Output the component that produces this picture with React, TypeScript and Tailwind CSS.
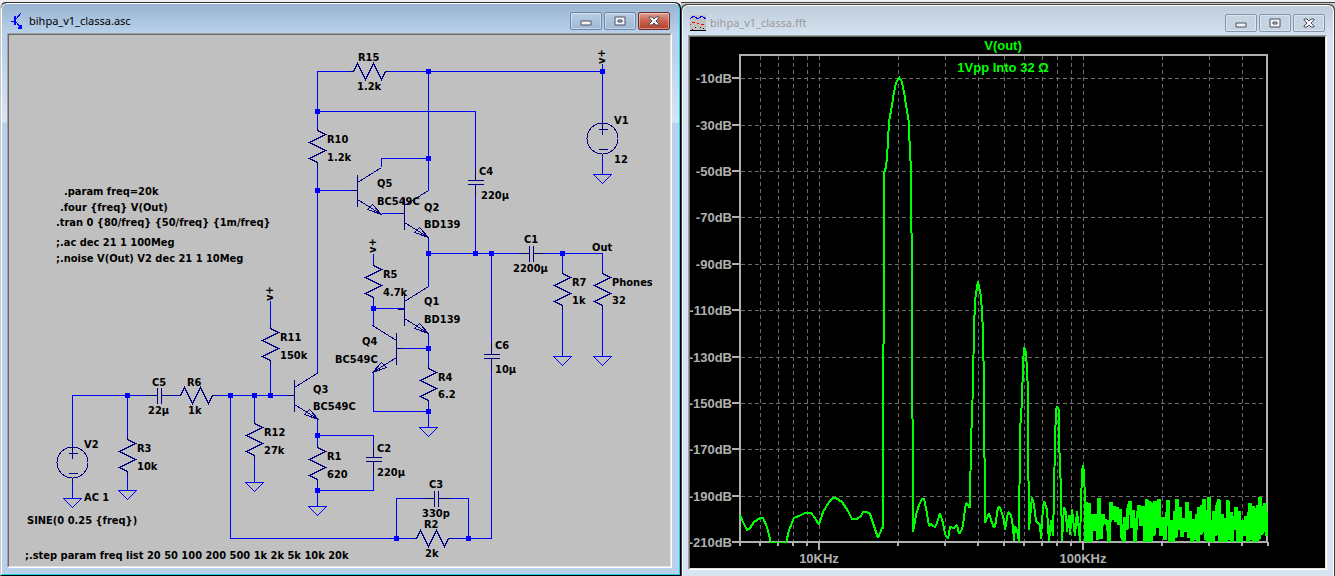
import type { ReactNode } from "react";

type Point = [number, number];
type Label = [number, number, string];

/* ---------- Schematic data ---------- */

const wires = [
  "M72 447V395H157",
  "M127 395V439",
  "M127 471V490",
  "M72 477V498",
  "M161 395H180",
  "M212 395H294",
  "M230 395V538H416",
  "M448 538H491V358",
  "M491 354V253",
  "M396 538V498H434",
  "M438 498H468V538",
  "M254 395V423",
  "M254 455V482",
  "M270 300V328",
  "M270 360V395",
  "M317 373V162",
  "M317 130V71H353",
  "M385 71H602",
  "M602 63V123",
  "M602 153V174",
  "M317 111H475V180",
  "M475 184V253",
  "M428 71V190",
  "M381 166V158H428",
  "M317 190H357",
  "M381 213H404",
  "M428 237V286",
  "M428 253H529",
  "M533 253H602V273",
  "M562 253V273",
  "M562 305V356",
  "M602 305V356",
  "M373 253V265",
  "M373 297V325",
  "M373 308H404",
  "M428 333V368",
  "M428 400V427",
  "M396 348H428",
  "M373 372V411H428",
  "M317 419V447",
  "M317 479V506",
  "M317 435H373V457",
  "M373 461V490H317",
];

const junctions: Point[] = [
  [428, 71], [602, 71], [317, 111], [428, 158], [317, 190],
  [428, 253], [475, 253], [491, 253], [562, 253], [373, 308],
  [428, 348], [428, 411], [127, 395], [230, 395], [254, 395],
  [270, 395], [317, 435], [317, 490], [396, 538], [468, 538],
];

const grounds: Point[] = [
  [72, 498], [127, 490], [254, 482], [317, 506],
  [428, 427], [562, 356], [602, 356], [602, 174],
];

const verticalResistors: Point[] = [
  [317, 130], [373, 265], [270, 328], [254, 423], [127, 439],
  [317, 447], [428, 368], [562, 273], [602, 273],
];

const horizontalResistors: Point[] = [[353, 71], [180, 395], [416, 538]];

const verticalCaps: Point[] = [[475, 180], [491, 354], [373, 457]];
const horizontalCaps: Point[] = [[529, 253], [157, 395], [434, 498]];

const sources: Point[] = [[72, 462], [602, 138]];

const labels: Label[] = [
  [358, 61, "R15"], [357, 90, "1.2k"],
  [327, 143, "R10"], [327, 161, "1.2k"],
  [377, 187, "Q5"], [377, 205, "BC549C"],
  [424, 211, "Q2"], [424, 228, "BD139"],
  [479, 175, "C4"], [481, 199, "220µ"],
  [383, 278, "R5"], [383, 296, "4.7k"],
  [424, 305, "Q1"], [424, 323, "BD139"],
  [362, 345, "Q4"], [335, 363, "BC549C"],
  [438, 381, "R4"], [438, 398, "6.2"],
  [495, 349, "C6"], [495, 373, "10µ"],
  [524, 243, "C1"], [513, 272, "2200µ"],
  [614, 124, "V1"], [614, 163, "12"],
  [592, 251, "Out"],
  [572, 286, "R7"], [572, 304, "1k"],
  [612, 286, "Phones"], [612, 304, "32"],
  [64, 195, ".param freq=20k"],
  [60, 211, ".four {freq} V(Out)"],
  [56, 226, ".tran 0 {80/freq} {50/freq} {1m/freq}"],
  [56, 246, ";.ac dec 21 1 100Meg"],
  [56, 262, ";.noise V(Out) V2 dec 21 1 10Meg"],
  [280, 341, "R11"], [280, 359, "150k"],
  [152, 386, "C5"], [148, 414, "22µ"],
  [187, 386, "R6"], [188, 414, "1k"],
  [84, 448, "V2"], [84, 501, "AC 1"],
  [137, 452, "R3"], [137, 470, "10k"],
  [264, 436, "R12"], [264, 454, "27k"],
  [27, 524, "SINE(0 0.25 {freq})"],
  [313, 393, "Q3"], [313, 410, "BC549C"],
  [327, 460, "R1"], [327, 478, "620"],
  [377, 452, "C2"], [377, 476, "220µ"],
  [429, 488, "C3"], [422, 517, "330p"],
  [424, 528, "R2"], [425, 557, "2k"],
  [25, 559, ";.step param freq list 20 50 100 200 500 1k 2k 5k 10k 20k"],
];

// Supply flags, written upwards
const supplies: Point[] = [[605, 64], [376, 253], [273, 301]];

/* ---------- FFT data ---------- */

const dbTicks = [-10, -30, -50, -70, -90, -110, -130, -150, -170, -190, -210];
const freqTicks = [6, 7, 8, 9, 10, 20, 30, 40, 50, 60, 70, 80, 90, 100, 200, 300, 400];

const dbToY = (db: number) => Math.round(78.2 + ((-10 - db) * 464) / 200);
const freqToX = (khz: number) => Math.round(819 + Math.log10(khz / 10) * 264);

const trace =
  "740,515 743,522 747,530 750,528 754,522 757,520 760,518 763,518 767,527 771,543 " +
  "786,543 789,530 794,518 801,515 805,513 811,513 815,518 819,525 823,512 829,502 833,498 836,498 842,502 848,511 " +
  "852,519 857,519 861,516 863,512 867,512 870,514 875,529 878,538 880,533 882,528 883,528 884,173 886,167 887,158 " +
  "888,140 889,122 892,105 894,92 896,83 899,77 902,82 904,92 906,105 908,117 909,122 910,158 911,163 912,300 913,532 " +
  "916,515 919,505 922,499 924,499 926,508 928,520 929,526 931,524 933,526 935,527 937,523 940,513 943,523 945,534 948,539 " +
  "950,527 954,528 957,525 959,534 961,531 963,526 964,517 966,503 968,505 970,508 971,436 972,420 973,380 974,330 975,300 978,281 " +
  "981,297 983,330 984,390 985,523 987,518 989,513 991,520 994,528 996,522 997,512 999,506 1001,510 1004,520 1005,530 " +
  "1008,512 1011,515 1013,527 1014,541 1015,526 1017,530 1019,542 1020,431 1022,400 1023,365 1024,347 1026,352 1028,390 " +
  "1028,431 1029,530 1032,497 1034,505 1036,521 1040,525 1041,539 1042,520 1044,501 1047,510 1049,541 1051,520 1053,536 " +
  "1054,495 1055,440 1056,410 1057,406 1059,410 1059,440 1061,490 1062,541 1064,507 1066,512 1067,532 1069,515 1070,535 " +
  "1072,509 1075,536 1077,511 1080,541 1081,505 1082,472 1083,465 1084,472 1085,500 1085,542";

// Noise floor above 100 kHz, where the bins crowd together
const noise =
  "1085,542 1087,502 1088,542 1089,503 " +
  "1091,542 1092,514 1094,531 1096,514 1098,540 1099,498 1101,539 1103,514 1105,524 1107,520 1109,542 1111,502 1113,520 1114,506 " +
  "1116,522 1117,507 1119,525 1120,509 1122,538 1124,542 1125,517 1127,530 1128,508 1130,501 1132,528 1133,510 1135,542 1137,518 " +
  "1139,505 1141,526 1143,506 1145,542 1147,499 1148,542 1150,501 1151,542 1152,503 1154,536 1155,501 1157,528 1159,499 1161,536 " +
  "1163,517 1165,540 1167,512 1168,500 1170,542 1172,520 1173,542 1175,511 1176,538 1177,499 1179,530 1180,507 1182,537 1184,518 " +
  "1186,532 1187,502 1189,538 1190,511 1192,542 1194,519 1196,540 1197,514 1198,542 1199,507 1201,535 1202,505 1203,532 1204,499 " +
  "1206,540 1207,510 1208,542 1209,497 1211,542 1212,520 1213,542 1214,511 1216,536 1217,505 1219,499 1220,542 1222,514 1223,542 " +
  "1225,518 1226,542 1228,500 1229,540 1231,512 1232,542 1234,516 1235,530 1236,507 1238,542 1239,511 1241,542 1243,520 1244,536 " +
  "1246,516 1248,542 1249,512 1250,503 1252,540 1253,506 1254,542 1255,508 1257,542 1258,505 1259,540 1260,497 1262,535 1263,506 " +
  "1264,532 1265,503 1267,536 1267,512";

/* ---------- Schematic symbols ---------- */

function Transistor({ x, y, flip = false }: { x: number; y: number; flip?: boolean }) {
  return (
    <g transform={`translate(${x} ${y})${flip ? " scale(-1 1)" : ""}`}>
      <path d="M-7 0H0M0 -16V16M0 -8L24 -23M0 9L24 24" />
      <path d="M24 24L10 19L15 14Z" />
    </g>
  );
}

function Schematic() {
  return (
    <svg
      viewBox="8.5 34.5 661 531"
      className="block w-full h-auto bg-[#c0c0c0]"
      role="img"
      aria-label="Amplifier schematic"
    >
      {/* Wires */}
      <g fill="none" stroke="#0000ff" shapeRendering="crispEdges">
        {wires.map((d) => (
          <path key={d} d={d} />
        ))}
        {grounds.map(([x, y]) => (
          <path key={`${x}-${y}`} d={`M${x - 9} ${y}h18l-9 9z`} />
        ))}
      </g>

      {/* Components */}
      <g fill="none" stroke="#000080" shapeRendering="crispEdges">
        {verticalResistors.map(([x, y]) => (
          <path key={`${x}-${y}`} d={`M${x} ${y - 4}v4l8 4l-16 8l16 8l-16 8l8 4v4`} />
        ))}
        {horizontalResistors.map(([x, y]) => (
          <path key={`${x}-${y}`} d={`M${x - 4} ${y}h4l4 -8l8 16l8 -16l8 16l4 -8h4`} />
        ))}
        {verticalCaps.map(([x, y]) => (
          <path key={`${x}-${y}`} d={`M${x} ${y - 12}v12m-8 0h16m-16 4h16m-8 0v12`} />
        ))}
        {horizontalCaps.map(([x, y]) => (
          <path key={`${x}-${y}`} d={`M${x - 12} ${y}h12m0 -8v16m4 -16v16m0 -8h12`} />
        ))}
        {sources.map(([x, y]) => (
          <g key={`${x}-${y}`}>
            <circle cx={x} cy={y} r="15.5" />
            <path d={`M${x - 4} ${y - 9}h9M${x} ${y - 18}v14M${x - 4} ${y + 11}h9M${x} ${y + 15}v4`} />
          </g>
        ))}
        <Transistor x={357} y={190} />
        <Transistor x={404} y={213} />
        <Transistor x={404} y={309} />
        <Transistor x={294} y={395} />
        <Transistor x={396} y={348} flip />
      </g>

      {/* Junctions */}
      <g stroke="#0000ff" strokeWidth="5" strokeLinecap="square" shapeRendering="crispEdges">
        {junctions.map(([x, y]) => (
          <path key={`${x}-${y}`} d={`M${x} ${y}h0`} />
        ))}
      </g>

      {/* Text */}
      <g
        transform="translate(-0.5 -0.5)"
        className="font-['DejaVu_Sans_Condensed','DejaVu_Sans',sans-serif] font-bold text-[11px]"
      >
        {labels.map(([x, y, text]) => (
          <text key={`${x}-${y}`} x={x} y={y}>
            {text}
          </text>
        ))}
        {supplies.map(([x, y]) => (
          <text key={`${x}-${y}`} transform={`translate(${x} ${y}) rotate(-90)`}>
            v+
          </text>
        ))}
      </g>
    </svg>
  );
}

function FftPlot() {
  return (
    <svg
      viewBox="690 37 635 531"
      className="block w-full h-auto bg-black"
      role="img"
      aria-label="FFT of V(out)"
    >
      <clipPath id="plot-area">
        <rect x="739" y="54" width="529" height="489" />
      </clipPath>

      {/* Grid */}
      <g stroke="#6c6c6c" strokeDasharray="4 3" shapeRendering="crispEdges">
        {dbTicks.slice(0, -1).map((db) => (
          <path key={db} d={`M741 ${dbToY(db)}H1266`} />
        ))}
        {freqTicks.map((f) => (
          <path key={f} d={`M${freqToX(f)} 56V541`} />
        ))}
      </g>

      {/* Frame and ticks */}
      <g fill="none" stroke="#b0b0b0" strokeWidth="2" shapeRendering="crispEdges">
        <rect x="740" y="55" width="527" height="487" />
        {dbTicks.map((db) => (
          <path key={db} d={`M732 ${dbToY(db)}h8`} />
        ))}
        {[5, ...freqTicks, 500].map((f) => (
          <path key={f} d={`M${freqToX(f)} 542v${f === 10 || f === 100 ? 8 : 4}`} />
        ))}
      </g>

      <g
        clipPath="url(#plot-area)"
        fill="none"
        stroke="#00ff00"
        strokeLinejoin="bevel"
        shapeRendering="crispEdges"
      >
        <polyline points={trace} strokeWidth="2" />
        <polyline points={noise} strokeWidth="3" />
      </g>

      <g className="font-['Liberation_Sans',Arial,sans-serif] font-bold text-[13px]" fill="#b0b0b0">
        {dbTicks.map((db) => (
          <text key={db} x="732" y={dbToY(db) + 5} textAnchor="end">
            {db}dB
          </text>
        ))}
        <text x="819" y="563" textAnchor="middle">10KHz</text>
        <text x="1083" y="563" textAnchor="middle">100KHz</text>
        <g fill="#00ff00">
          <text x="1003" y="50" textAnchor="middle">V(out)</text>
          <text x="1003" y="72" textAnchor="middle">1Vpp Into 32 Ω</text>
        </g>
      </g>
    </svg>
  );
}

/* ---------- Window chrome ---------- */

function SchematicIcon() {
  return (
    <svg viewBox="0 0 16 16" className="size-4" fill="none" stroke="#0000ff" shapeRendering="crispEdges">
      <path d="M2 8H6" strokeWidth="1" />
      <path d="M6 3V12" strokeWidth="2" />
      <path d="M7 6L12 0M7 9L12 15" />
      <path d="M13 16V12H11V14H9V16Z" fill="#0000ff" stroke="none" />
    </svg>
  );
}

function PlotIcon() {
  return (
    <svg viewBox="0 0 16 16" className="size-4" shapeRendering="crispEdges">
      <rect width="16" height="16" fill="#c0c0c0" />
      <path d="M0 4L4 1L8 4L12 1L16 4" fill="none" stroke="#0000ff" />
      <path d="M2 7h3v1h-3zM7 8h2v1h-2zM11 9h3v1h-3zM0 9h1v1h-1z" fill="#ff0000" />
      <path d="M0 15h16v1h-16zM5 12h1v1h-1zM10 12h1v1h-1zM2 14h1v1h-1zM13 13h1v1h-1z" fill="#000" />
    </svg>
  );
}

const glyphs: Record<string, ReactNode> = {
  Minimize: <path d="M1 5h10v4h-10z" />,
  Maximize: <path d="M1 1h10v8h-10zM4 4h4v2h-4z" fillRule="evenodd" />,
  Close: <path d="M1 1h3l2 2l2 -2h3v1l-3 3l3 3v1h-3l-2 -2l-2 2h-3v-1l3 -3l-3 -3z" />,
};

function CaptionButton({ name, active }: { name: string; active: boolean }) {
  let look = "border-[#8793ab] bg-[#c6d3e1]";
  if (active) {
    look =
      name === "Close"
        ? "border-[#6b2a2a] bg-linear-to-b from-[#dd9f94] via-[#c9604d] via-50% to-[#b5402b]"
        : "border-[#6f86a6] bg-linear-to-b from-[#b9cde3] to-[#9db8d6]";
  }
  return (
    <button
      aria-label={name}
      className={`flex h-[18px] w-8 items-center justify-center rounded-[2px] border shadow-[inset_0_0_0_1px_#ffffff66] ${look}`}
    >
      <svg
        viewBox="0 0 12 10"
        className="h-[10px] w-3"
        fill="#f4f4f4"
        stroke="#4a4f63"
      >
        {glyphs[name]}
      </svg>
    </button>
  );
}

function TitleBar({ title, icon, active }: { title: string; icon: ReactNode; active: boolean }) {
  return (
    <header className="flex items-center justify-between pt-2 pb-[3px] px-[2px]">
      <div className="flex items-center gap-1">
        {icon}
        <h1
          className={`font-['Noto_Sans',sans-serif] text-[11px] leading-[18px] ${
            active ? "text-black" : "text-[#999999]"
          }`}
        >
          {title}
        </h1>
      </div>
      <div className="flex gap-[2px]">
        <CaptionButton name="Minimize" active={active} />
        <CaptionButton name="Maximize" active={active} />
        <CaptionButton name="Close" active={active} />
      </div>
    </header>
  );
}

function ClientArea({ children }: { children: ReactNode }) {
  return (
    <div className="border border-t-[#a0a0a0] border-l-[#a0a0a0] border-r-white border-b-white">
      <div className="border border-t-[#696969] border-l-[#696969] border-r-[#e3e3e3] border-b-[#e3e3e3]">
        {children}
      </div>
    </div>
  );
}

export default function App() {
  return (
    <main className="grid grid-cols-[681fr_654fr] items-start bg-[#f0f0f0] pt-[2px]">
      {/* Schematic window */}
      <section className="border-t border-r border-b border-l border-t-[#303030] border-r-black border-b-black border-l-[#c8c8c8] rounded-t-md bg-black">
        <div className="rounded-t-md border border-t-white border-l-white border-r-[#25d0ea] border-b-[#25d0ea] pl-[5px] pr-[7px] pb-[6px] bg-[linear-gradient(to_bottom,#99b4d1_0px,#b9d1ea_30px,#b9d1ea_45px,#d8e5f4_118px,#b9d1ea_119px)]">
          <TitleBar title="bihpa_v1_classa.asc" icon={<SchematicIcon />} active />
          <ClientArea>
            <Schematic />
          </ClientArea>
        </div>
      </section>

      {/* Plot window */}
      <div className="border-t border-[#404040] bg-[#c8c8c8] pt-px">
        <section className="rounded-t-md border border-b-0 border-[#404040] bg-[#404040]">
          <div className="rounded-t-md border border-b-0 border-white pl-[5px] pr-[6px] pb-[6px] bg-[linear-gradient(to_bottom,#bfcddb_0px,#d7e4f2_32px)]">
            <TitleBar title="bihpa_v1_classa.fft" icon={<PlotIcon />} active={false} />
            <ClientArea>
              <FftPlot />
            </ClientArea>
          </div>
        </section>
      </div>
    </main>
  );
}
